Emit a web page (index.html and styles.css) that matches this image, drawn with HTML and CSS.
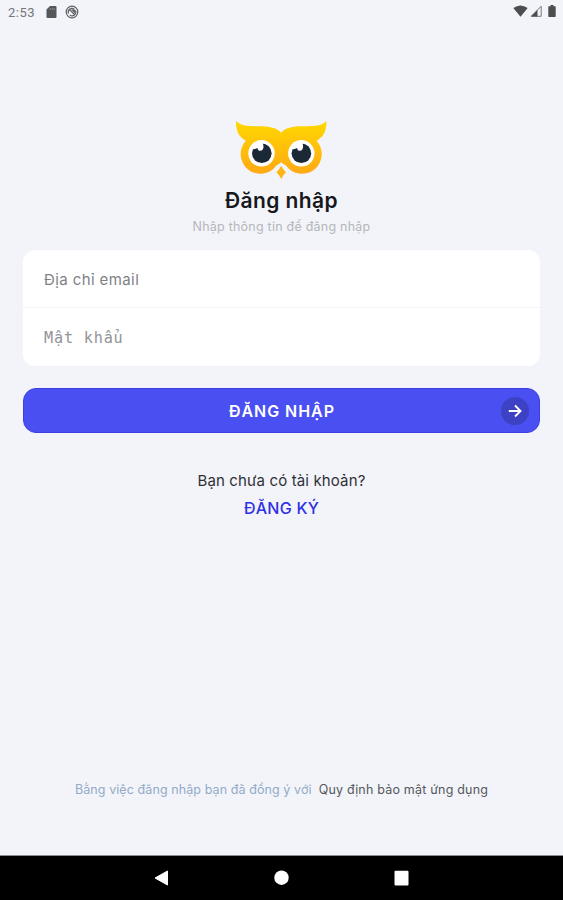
FILE: index.html
```html
<!DOCTYPE html>
<html lang="vi">
<head>
  <meta charset="UTF-8">
  <meta name="viewport" content="width=device-width, initial-scale=1.0">
  <title>Đăng nhập</title>
  <link rel="stylesheet" href="styles.css">
</head>
<body>
  <div class="status-bar">
    <span class="clock">2:53</span>
    <svg class="icon-sd" width="11" height="12" viewBox="0 0 11 12">
      <path d="M4 0h5.5a1 1 0 0 1 1 1v10a1 1 0 0 1-1 1h-8a1 1 0 0 1-1-1V3.5z" fill="#555658"/>
      <path d="M4.2 2v2M6.2 2v2M8.2 2v2" stroke="#96979a" stroke-width=".8"/>
    </svg>
    <svg class="icon-sync" width="14" height="14" viewBox="0 0 14 14" fill="none" stroke="#606164">
      <circle cx="7" cy="7" r="5.8" stroke-width="1.2"/>
      <path d="M3.6 8.6a3.6 3.6 0 0 1 5.6-4.3M10.4 5.6a3.6 3.6 0 0 1-5.6 4.3M4 4l6 6" stroke-width="1.2"/>
      <path d="M6 4.5h4v4z" fill="#606164" stroke="none"/>
    </svg>
    <div class="status-right">
      <svg width="15" height="12" viewBox="0 0 15 12"><path d="M.3 3Q7.5-2.2 14.7 3L7.5 11.7z" fill="#4c4d4f"/></svg>
      <svg width="12" height="12" viewBox="0 0 12 12">
        <path d="M1.2 11.3L11.2 1.2v10.1z" fill="none" stroke="#77787a"/>
        <path d="M1 11.5L7.5 5v6.5z" fill="#4c4d4f"/>
      </svg>
      <svg class="icon-battery" width="8" height="12" viewBox="0 0 8 12"><path d="M2.5 0h3v1.2H7q.7 0 .7.7v9.4q0 .7-.7.7H1q-.7 0-.7-.7V1.9q0-.7.7-.7h1.5z" fill="#4c4d4f"/></svg>
    </div>
  </div>

  <main class="content">
    <svg class="logo" width="92" height="60" viewBox="0 0 92 60">
      <defs>
        <linearGradient id="owl" x1="0" y1="0" x2="0" y2="1">
          <stop offset="0" stop-color="#ffd800"/>
          <stop offset="1" stop-color="#ffa914"/>
        </linearGradient>
      </defs>
      <path d="M1 1C6 5.8 12 6 20 6.2C32 5.8 42 7 46.2 12.7C50 7 60 5.8 72 6.2C81 6 87 5.8 91.4 1C91.8 10 88.6 17 81.6 20.8A19.7 19.7 0 1 1 51 45.5Q47.5 43.5 46.2 42.3Q45 43.5 41.4 45.5A19.7 19.7 0 1 1 10.8 20.8C3.8 17 .6 10 1 1Z" fill="url(#owl)"/>
      <path d="M46.2 45.8Q48 49.5 51 52.3Q48 55 46.2 59Q44.4 55 41.4 52.3Q44.4 49.5 46.2 45.8Z" fill="#fdb714"/>
      <circle cx="26.5" cy="33.3" r="13.2" fill="#fff"/>
      <circle cx="66.3" cy="33.3" r="13.2" fill="#fff"/>
      <circle cx="26.8" cy="33.2" r="9.8" fill="#1b2937"/>
      <circle cx="66.4" cy="33.2" r="9.8" fill="#1b2937"/>
      <path d="M17.5 29L19 22H27Q29.4 25.5 28 29Q26.5 31.4 24.2 30.7Q22.6 30 22.5 28Q20.5 29.5 17.5 29Z" fill="#fff"/>
      <path d="M57.1 29L58.6 22H66.6Q69 25.5 67.6 29Q66.1 31.4 63.8 30.7Q62.2 30 62.1 28Q60.1 29.5 57.1 29Z" fill="#fff"/>
    </svg>
    <h1 class="title">Đăng nhập</h1>
    <p class="subtitle">Nhập thông tin để đăng nhập</p>

    <form class="login-form">
      <div class="fields">
        <input class="field" type="email" placeholder="Địa chỉ email">
        <input class="field password" type="password" placeholder="Mật khẩu">
      </div>
      <button class="submit" type="button">
        <span class="submit-label">ĐĂNG NHẬP</span>
        <span class="submit-arrow">
          <svg width="14" height="14" viewBox="0 0 14 14" fill="none" stroke="#fff" stroke-width="1.9"><path d="M.8 7h11.5M7 1.5L12.5 7L7 12.5"/></svg>
        </span>
      </button>
    </form>

    <p class="question">Bạn chưa có tài khoản?</p>
    <a class="register">ĐĂNG KÝ</a>
  </main>

  <footer class="terms">
    <span class="terms-text">Bằng việc đăng nhập bạn đã đồng ý với</span>
    <a class="terms-link">Quy định bảo mật ứng dụng</a>
  </footer>

  <nav class="nav-bar">
    <svg width="15" height="16" viewBox="0 0 15 16"><path d="M1 8L13.5 1v14z" fill="#fff" stroke="#fff" stroke-linejoin="round"/></svg>
    <svg width="15" height="16" viewBox="0 0 15 16"><circle cx="7.5" cy="7.7" r="7.2" fill="#fff"/></svg>
    <svg width="15" height="16" viewBox="0 0 15 16"><rect x=".5" y=".8" width="14" height="14.6" rx="1" fill="#fff"/></svg>
  </nav>
</body>
</html>
```
FILE: styles.css
```css
* {
  box-sizing: border-box;
}

body {
  display: flex;
  flex-direction: column;
  height: 900px;
  margin: 0;
  background: #f2f4f9;
  font-family: Inter, "Noto Sans", sans-serif;
  color: #17181c;
  overflow: hidden;
}

/* Status bar */
.status-bar {
  display: flex;
  align-items: center;
  height: 24px;
  padding: 0 7px 0 8px;
}

.clock {
  width: 38px;
  font-family: Roboto, sans-serif;
  font-size: 13px;
  letter-spacing: 0.5px;
  color: #75767a;
}

.icon-sync {
  margin-left: 8px;
}

.status-right {
  display: flex;
  gap: 2px;
  margin-left: auto;
  margin-top: -2px;
}

.icon-battery {
  margin-left: 4px;
}

/* Login */
.content {
  display: flex;
  flex: 1;
  flex-direction: column;
  align-items: center;
  padding: 96px 23px 0;
}

.logo {
  display: block;
  margin-right: 1px;
}

.title {
  margin: 6px 0 0;
  font-size: 21px;
  font-weight: 600;
  line-height: 30px;
  letter-spacing: 0.4px;
}

.subtitle {
  margin: 2px 0 0;
  font-size: 12.5px;
  line-height: 18px;
  letter-spacing: 0.23px;
  color: #b5b6ba;
}

.login-form {
  width: 100%;
  margin-top: 14px;
}

.fields {
  border-radius: 12px;
  background: #fff;
  overflow: hidden;
}

.field {
  display: block;
  width: 100%;
  height: 57px;
  padding: 2px 21px 0;
  border: 0;
  background: none;
  font-family: inherit;
  font-size: 15px;
  letter-spacing: 0.4px;
  outline: none;
}

.field + .field {
  height: 59px;
  border-top: 1px solid #f3f4f6;
}

.field::placeholder {
  color: #808185;
  opacity: 1;
}

.field.password {
  padding-top: 1px;
  font-family: "DejaVu Sans Mono", monospace;
  font-size: 15.2px;
  letter-spacing: 0.8px;
}

.password::placeholder {
  color: #929397;
}

.submit {
  display: flex;
  align-items: center;
  width: 100%;
  height: 45px;
  margin-top: 22px;
  padding: 1px 10px 0 39px;
  border: 1px solid #3e3fe2;
  border-radius: 13px;
  background: #494ff0;
  color: #fff;
}

.submit-label {
  flex: 1;
  font-family: Inter, sans-serif;
  font-size: 16px;
  font-weight: 600;
  letter-spacing: 0.95px;
}

.submit-arrow {
  display: flex;
  align-items: center;
  justify-content: center;
  width: 28px;
  height: 28px;
  border-radius: 50%;
  background: #3d41c4;
}

.question {
  margin: 37px 0 0;
  font-size: 15px;
  line-height: 22px;
  letter-spacing: 0.14px;
  color: #303135;
}

.register {
  margin-top: 5px;
  font-size: 16px;
  font-weight: 500;
  line-height: 22px;
  letter-spacing: 0.25px;
  color: #3030e4;
}

/* Footer */
.terms {
  display: flex;
  justify-content: center;
  gap: 7px;
  margin-bottom: 56px;
  font-size: 12.5px;
  line-height: 18px;
  white-space: nowrap;
}

.terms-text {
  letter-spacing: 0.09px;
  color: #92abc8;
}

.terms-link {
  letter-spacing: 0.19px;
  color: #55575c;
}

.nav-bar {
  display: flex;
  align-items: center;
  justify-content: center;
  gap: 105px;
  height: 45px;
  border-top: 1px solid #8b8c8f;
  background: #000;
}
```
